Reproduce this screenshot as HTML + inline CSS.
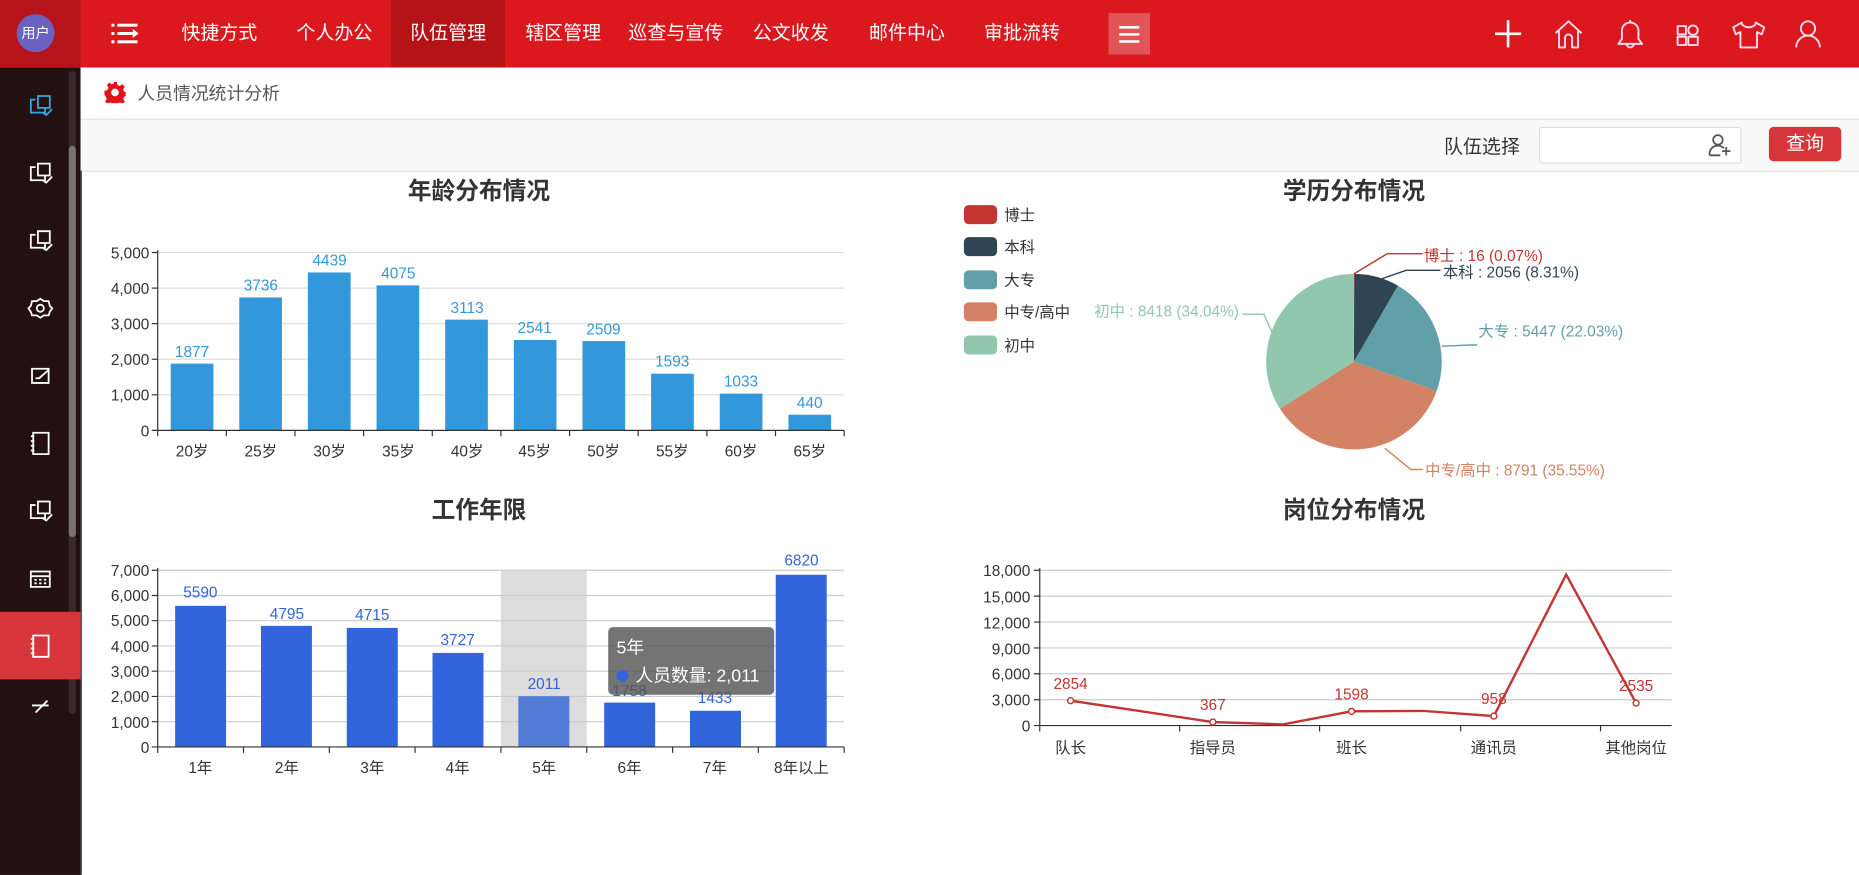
<!DOCTYPE html>
<html><head><meta charset="utf-8">
<style>
html,body{margin:0;padding:0;width:1859px;height:875px;overflow:hidden;background:#fff;}
#w{position:absolute;left:0;top:0;width:1568px;height:738px;transform:scale(1.18559);transform-origin:0 0;font-family:"Liberation Sans","Noto Sans CJK SC",sans-serif;}
.top{position:absolute;left:0;top:0;width:1568px;height:57px;background:#da181d;}
.av{position:absolute;left:0;top:0;width:68px;height:57px;background:#b5151a;}
.av div{position:absolute;left:14px;top:12px;width:32px;height:32px;border-radius:50%;background:#6a62c0;color:#fff;font-size:12px;line-height:32px;text-align:center;}
.mi{position:absolute;top:0;height:57px;line-height:57px;color:#fff;font-size:16px;text-align:center;}
.side{position:absolute;left:0;top:57px;width:68px;height:681px;background:#231112;}
.crumb{position:absolute;left:68px;top:57px;width:1500px;height:43px;border-bottom:1px solid #ddd;background:#fff;}
.filt{position:absolute;left:68px;top:101px;width:1500px;height:43px;border-bottom:1px solid #e5e5e5;background:#f9f9f9;}
svg text{font-family:"Liberation Sans","Noto Sans CJK SC",sans-serif;}
</style></head><body><div id="w">
<div class="top">
 <div class="av"><div>用户</div></div>
 <svg style="position:absolute;left:90px;top:14px" width="30" height="30" viewBox="0 0 30 30">
  <g fill="#fff"><rect x="4" y="6" width="2.5" height="2.5"/><rect x="9" y="6" width="17" height="2.5"/><rect x="4" y="13" width="2.5" height="2.5"/><rect x="9" y="13" width="13" height="2.5"/><path d="M22 10.5 L27 14.25 L22 18Z"/><rect x="4" y="20" width="2.5" height="2.5"/><rect x="9" y="20" width="17" height="2.5"/></g>
 </svg>
 <div class="mi" style="left:140px;width:90px">快捷方式</div>
 <div class="mi" style="left:237px;width:90px">个人办公</div>
 <div class="mi" style="left:330px;width:96px;background:#b41418">队伍管理</div>
 <div class="mi" style="left:430px;width:90px">辖区管理</div>
 <div class="mi" style="left:522px;width:96px">巡查与宣传</div>
 <div class="mi" style="left:622px;width:90px">公文收发</div>
 <div class="mi" style="left:720px;width:90px">邮件中心</div>
 <div class="mi" style="left:817px;width:90px">审批流转</div>
 <div style="position:absolute;left:935px;top:11px;width:35px;height:35px;background:#e25458"></div>
 <svg style="position:absolute;left:935px;top:11px" width="35" height="35"><g stroke="#fff" stroke-width="2.2"><line x1="9" y1="12" x2="26" y2="12"/><line x1="9" y1="18" x2="26" y2="18"/><line x1="9" y1="24" x2="26" y2="24"/></g></svg>
 <svg style="position:absolute;left:1250px;top:10px" width="300" height="36" viewBox="0 0 300 36" fill="none" stroke="#fde" stroke-width="1.6" stroke-linejoin="round">
  <path d="M22 7V30M11 18.5H33" stroke="#fff" stroke-width="2.2"/>
  <path d="M62 18L73 8L84 18M65 16V30H70V22A3 3 0 0 1 76 22V30H81V16"/>
  <path d="M115 27H135L132 23V16A7 7 0 0 0 118 16V23Z M122 27A3 3 0 0 0 128 27 M125 9V7"/>
  <path d="M165 12H172V19H165Z M165 21H172V28H165Z M174 21H182V28H174Z"/><circle cx="178" cy="15.5" r="4"/>
  <path d="M219 9L212 13L214 19L218 17V30H232V17L236 19L238 13L231 9A6 4 0 0 1 219 9Z"/>
  <circle cx="275" cy="14" r="6"/><path d="M265 30A10 10 0 0 1 285 30"/>
 </svg>
</div>
<div class="side">
 <div style="position:absolute;left:58px;top:3px;width:6px;height:542px;background:#3a2a2b;border-radius:3px"></div>
 <div style="position:absolute;left:58px;top:66px;width:6px;height:330px;background:#7b7171;border-radius:3px"></div>
 <div style="position:absolute;left:0;top:459px;width:68px;height:57px;background:#d63639"></div>
 <svg style="position:absolute;left:0;top:0" width="68" height="560" fill="none" stroke="#fff" stroke-width="1.5">
  <g stroke="#35a8e0"><path d="M30 27H26V38H38V34M32 24H42V34H32Z M36 38L39 40L44 35"/></g>
  <path d="M30 84H26V95H38V91M32 81H42V91H32Z M36 95L39 97L44 92"/>
  <path d="M30 141H26V152H38V148M32 138H42V148H32Z M36 152L39 154L44 149"/>
  <circle cx="34" cy="203" r="3"/><path d="M34 195L37 197L41 197L42 201L44 203L42 206L41 209L37 209L34 211L31 209L27 209L26 206L24 203L26 201L27 197L31 197Z"/>
  <path d="M27 254H41V266H27Z M30 262H34 M33 262L41 255"/>
  <path d="M28 308H41V326H28Z M26 311H29M26 315H29M26 319H29M26 323H29"/>
  <path d="M30 369H26V380H38V376M32 366H42V376H32Z M36 380L39 382L44 377"/>
  <path d="M26 425H42V438H26Z M26 429H42 M29 432H31M33 432H35M37 432H39M29 435H31M33 435H35M37 435H39"/>
  <path d="M28 479H41V497H28Z M26 482H29M26 486H29M26 490H29M26 494H29"/>
  <path d="M27 538H41 M30 544L40 534"/>
 </svg>
</div>
<div class="crumb">
 <svg style="position:absolute;left:20px;top:12px" width="18" height="18" viewBox="0 0 18 18"><path fill="#e0151c" d="M7.5 0h3l.5 2.5 2 1 2.2-1.4 2.1 2.1-1.4 2.2 1 2 2.5.5v3l-2.5.5-1 2 1.4 2.2-2.1 2.1-2.2-1.4-2 1-.5 2.5h-3l-.5-2.5-2-1-2.2 1.4-2.1-2.1 1.4-2.2-1-2L0 10.5v-3l2.5-.5 1-2L2.1 2.8 4.2.7l2.2 1.4 2-1z"/><circle cx="9" cy="9" r="3.2" fill="#fff"/></svg>
 <div style="position:absolute;left:48px;top:11px;font-size:15px;color:#555">人员情况统计分析</div>
</div>
<div class="filt">
 <div style="position:absolute;left:1150px;top:9px;font-size:16px;color:#333">队伍选择</div>
 <div style="position:absolute;left:1230px;top:6px;width:169px;height:29px;background:#fff;border:1px solid #ddd;border-radius:2px"></div>
 <svg style="position:absolute;left:1372px;top:10px" width="22" height="22" fill="none" stroke="#555" stroke-width="1.5"><circle cx="9" cy="7" r="4"/><path d="M2 20A7 7 0 0 1 14 14 M2 20H11 M16 13V20M12.5 16.5H19.5"/></svg>
 <div style="position:absolute;left:1424px;top:6px;width:61px;height:29px;background:#d63639;border-radius:4px;color:#fff;font-size:16px;line-height:29px;text-align:center">查询</div>
</div>
<div style="position:absolute;left:68px;top:144px;width:1px;height:594px;background:#333"></div>
<svg style="position:absolute;left:0;top:0" width="1568" height="738" font-size="13">
 <g font-size="20" font-weight="bold" fill="#333" text-anchor="middle">
  <text x="404" y="168">年龄分布情况</text><text x="1142" y="168">学历分布情况</text>
  <text x="404" y="437">工作年限</text><text x="1142" y="437">岗位分布情况</text>
 </g>
 <g stroke="#ddd"><line x1="133" y1="213" x2="712" y2="213"/><line x1="133" y1="243" x2="712" y2="243"/><line x1="133" y1="273" x2="712" y2="273"/><line x1="133" y1="303" x2="712" y2="303"/><line x1="133" y1="333" x2="712" y2="333"/></g>
 <g fill="#333" text-anchor="end"><text x="126" y="218">5,000</text><text x="126" y="248">4,000</text><text x="126" y="278">3,000</text><text x="126" y="308">2,000</text><text x="126" y="338">1,000</text><text x="126" y="368">0</text></g>
 <g fill="#3398db"><rect x="144" y="306.7" width="36" height="56.3"/><rect x="201.8" y="250.9" width="36" height="112.1"/><rect x="259.7" y="229.8" width="36" height="133.2"/><rect x="317.6" y="240.7" width="36" height="122.3"/><rect x="375.5" y="269.6" width="36" height="93.4"/><rect x="433.4" y="286.8" width="36" height="76.2"/><rect x="491.3" y="287.7" width="36" height="75.3"/><rect x="549.2" y="315.2" width="36" height="47.8"/><rect x="607.1" y="332" width="36" height="31"/><rect x="665" y="349.8" width="36" height="13.2"/></g>
 <g fill="#3398db" text-anchor="middle"><text x="162" y="301">1877</text><text x="220" y="245">3736</text><text x="278" y="224">4439</text><text x="336" y="235">4075</text><text x="394" y="264">3113</text><text x="451" y="281">2541</text><text x="509" y="282">2509</text><text x="567" y="309">1593</text><text x="625" y="326">1033</text><text x="683" y="344">440</text></g>
 <g stroke="#333"><line x1="133" y1="211" x2="133" y2="368"/><line x1="128" y1="213" x2="133" y2="213"/><line x1="128" y1="243" x2="133" y2="243"/><line x1="128" y1="273" x2="133" y2="273"/><line x1="128" y1="303" x2="133" y2="303"/><line x1="128" y1="333" x2="133" y2="333"/><line x1="128" y1="363" x2="712" y2="363"/>
 <path d="M190.9 363v5M248.8 363v5M306.7 363v5M364.6 363v5M422.5 363v5M480.4 363v5M538.3 363v5M596.2 363v5M654.1 363v5M712 363v5"/></g>
 <g fill="#333" text-anchor="middle"><text x="162" y="385">20岁</text><text x="220" y="385">25岁</text><text x="278" y="385">30岁</text><text x="336" y="385">35岁</text><text x="394" y="385">40岁</text><text x="451" y="385">45岁</text><text x="509" y="385">50岁</text><text x="567" y="385">55岁</text><text x="625" y="385">60岁</text><text x="683" y="385">65岁</text></g>
 <rect x="422.5" y="481" width="72.4" height="149" fill="#dcdcdc"/>
 <g stroke="#ccc"><line x1="133" y1="481" x2="712" y2="481"/><line x1="133" y1="502.3" x2="712" y2="502.3"/><line x1="133" y1="523.5" x2="712" y2="523.5"/><line x1="133" y1="544.8" x2="712" y2="544.8"/><line x1="133" y1="566.1" x2="712" y2="566.1"/><line x1="133" y1="587.4" x2="712" y2="587.4"/><line x1="133" y1="608.7" x2="712" y2="608.7"/></g>
 <g fill="#333" text-anchor="end"><text x="126" y="486">7,000</text><text x="126" y="507">6,000</text><text x="126" y="528">5,000</text><text x="126" y="550">4,000</text><text x="126" y="571">3,000</text><text x="126" y="592">2,000</text><text x="126" y="614">1,000</text><text x="126" y="635">0</text></g>
 <g fill="#3265db"><rect x="147.7" y="511" width="43" height="119"/><rect x="220.1" y="527.9" width="43" height="102.1"/><rect x="292.5" y="529.6" width="43" height="100.4"/><rect x="364.8" y="550.7" width="43" height="79.3"/><rect x="437.2" y="587.2" width="43" height="42.8" fill="#527bd6"/><rect x="509.6" y="592.6" width="43" height="37.4"/><rect x="582" y="599.5" width="43" height="30.5"/><rect x="654.3" y="484.8" width="43" height="145.2"/></g>
 <g fill="#3265db" text-anchor="middle"><text x="169" y="504">5590</text><text x="242" y="522">4795</text><text x="314" y="523">4715</text><text x="386" y="544">3727</text><text x="459" y="581">2011</text><text x="531" y="587">1758</text><text x="603" y="593">1433</text><text x="676" y="477">6820</text></g>
 <g stroke="#333"><line x1="133" y1="479" x2="133" y2="635"/><path d="M128 481h5M128 502.3h5M128 523.5h5M128 544.8h5M128 566.1h5M128 587.4h5M128 608.7h5"/><line x1="128" y1="630" x2="712" y2="630"/>
 <path d="M205.4 630v5M277.8 630v5M350.1 630v5M422.5 630v5M494.9 630v5M567.3 630v5M639.6 630v5M712 630v5"/></g>
 <g fill="#333" text-anchor="middle"><text x="169" y="652">1年</text><text x="242" y="652">2年</text><text x="314" y="652">3年</text><text x="386" y="652">4年</text><text x="459" y="652">5年</text><text x="531" y="652">6年</text><text x="603" y="652">7年</text><text x="676" y="652">8年以上</text></g>
 <rect x="513" y="529" width="140" height="57" rx="4" fill="#555" fill-opacity="0.82"/>
 <g fill="#fff" font-size="15"><text x="520" y="551">5年</text><text x="536" y="575">人员数量: 2,011</text></g>
 <circle cx="525" cy="570" r="5" fill="#3265db"/>
 <g font-size="13">
  <rect x="813" y="173" width="28" height="16" rx="4" fill="#c23531"/><text x="847" y="186" fill="#333">博士</text>
  <rect x="813" y="200" width="28" height="16" rx="4" fill="#2f4554"/><text x="847" y="213" fill="#333">本科</text>
  <rect x="813" y="228" width="28" height="16" rx="4" fill="#61a0a8"/><text x="847" y="241" fill="#333">大专</text>
  <rect x="813" y="255" width="28" height="16" rx="4" fill="#d48265"/><text x="847" y="268" fill="#333">中专/高中</text>
  <rect x="813" y="283" width="28" height="16" rx="4" fill="#91c7ae"/><text x="847" y="296" fill="#333">初中</text>
 </g>
 <path d="M1142 305L1142 231A74 74 0 0 1 1142.3 231Z" fill="#c23531"/>
 <path d="M1142 305L1142.3 231A74 74 0 0 1 1179.2 241Z" fill="#2f4554"/>
 <path d="M1142 305L1179.2 241A74 74 0 0 1 1211.8 329.7Z" fill="#61a0a8"/>
 <path d="M1142 305L1211.8 329.7A74 74 0 0 1 1079.6 344.8Z" fill="#d48265"/>
 <path d="M1142 305L1079.6 344.8A74 74 0 0 1 1142 231Z" fill="#91c7ae"/>
 <g fill="none" stroke-width="1.2">
  <path d="M1142 231L1170 214H1200" stroke="#c23531"/>
  <path d="M1160 237L1186 228H1215" stroke="#2f4554"/>
  <path d="M1216 292L1240 291H1246" stroke="#61a0a8"/>
  <path d="M1168 378L1190 396H1200" stroke="#d48265"/>
  <path d="M1075 285L1066 265H1048" stroke="#91c7ae"/>
 </g>
 <g font-size="13">
  <text x="1201" y="220" fill="#c23531">博士 : 16 (0.07%)</text>
  <text x="1217" y="234" fill="#2f4554">本科 : 2056 (8.31%)</text>
  <text x="1247" y="284" fill="#61a0a8">大专 : 5447 (22.03%)</text>
  <text x="1202" y="401" fill="#d48265">中专/高中 : 8791 (35.55%)</text>
  <text x="1045" y="267" fill="#91c7ae" text-anchor="end">初中 : 8418 (34.04%)</text>
 </g>
 <g stroke="#ccc"><line x1="877" y1="481" x2="1410" y2="481"/><line x1="877" y1="502.8" x2="1410" y2="502.8"/><line x1="877" y1="524.7" x2="1410" y2="524.7"/><line x1="877" y1="546.5" x2="1410" y2="546.5"/><line x1="877" y1="568.3" x2="1410" y2="568.3"/><line x1="877" y1="590.2" x2="1410" y2="590.2"/></g>
 <g fill="#333" text-anchor="end"><text x="869" y="486">18,000</text><text x="869" y="508">15,000</text><text x="869" y="530">12,000</text><text x="869" y="552">9,000</text><text x="869" y="573">6,000</text><text x="869" y="595">3,000</text><text x="869" y="617">0</text></g>
 <g stroke="#333"><line x1="877" y1="479" x2="877" y2="617"/><path d="M872 481h5M872 502.8h5M872 524.7h5M872 546.5h5M872 568.3h5M872 590.2h5"/><line x1="872" y1="612" x2="1410" y2="612"/>
 <path d="M995 612v5M1113 612v5M1232 612v5M1350 612v5"/></g>
 <polyline points="903,591 963,600 1023,609 1082,611 1140,600 1200,599.6 1260,604 1321,484.6 1380,593" fill="none" stroke="#c23531" stroke-width="2"/>
 <g fill="#fff" stroke="#c23531" stroke-width="1.2"><circle cx="903" cy="591" r="2.5"/><circle cx="1023" cy="609" r="2.5"/><circle cx="1140" cy="600" r="2.5"/><circle cx="1260" cy="604" r="2.5"/><circle cx="1380" cy="593" r="2.5"/></g>
 <g fill="#c23531" text-anchor="middle"><text x="903" y="581">2854</text><text x="1023" y="599">367</text><text x="1140" y="590">1598</text><text x="1260" y="594">958</text><text x="1380" y="583">2535</text></g>
 <g fill="#333" text-anchor="middle"><text x="903" y="635">队长</text><text x="1023" y="635">指导员</text><text x="1140" y="635">班长</text><text x="1260" y="635">通讯员</text><text x="1380" y="635">其他岗位</text></g>
</svg>
</div></body></html>
